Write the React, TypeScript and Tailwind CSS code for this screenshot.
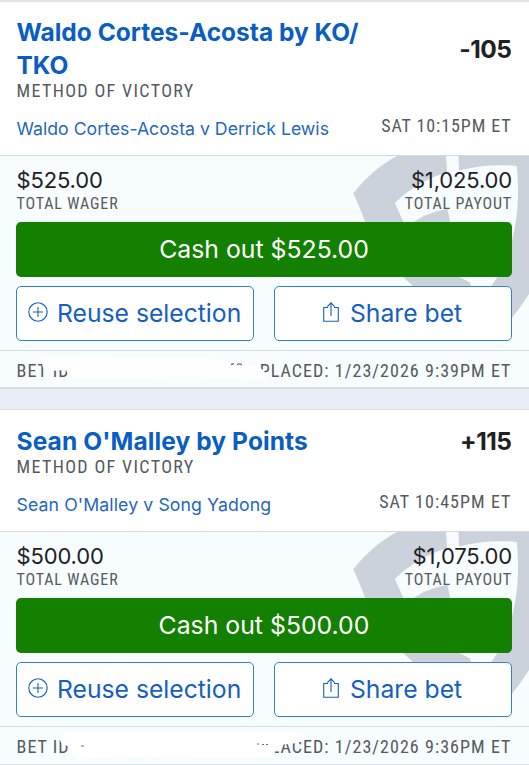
import type { ReactNode } from 'react';

const condensed = "font-['Roboto',sans-serif] font-stretch-condensed text-[#565a5e]";

// Watermark shield clipped by the right edge of the bet body
function Shield() {
  return (
    <svg className="absolute right-0 top-0 h-[195px] w-[179px]" viewBox="350 155 179 195" fill="#ccd2dc" aria-hidden="true">
      <path d="M399 155H446L447 172.5C427 178 409 189 394.8 203L404 223H365.5C362 213 358 203 353.2 193.5C365 178 381 164 399 155Z" />
      <path d="M458.5 155H529V294Q521 307 511 319L490 288L498 276C514 247 521 211 516.8 166Q488 163 459 170.5Z" />
      <path d="M412 223C424 215 435 211 447.5 209L450.5 223Z" />
      <path d="M401 275H456L470 282.5L471.5 288H415Z" />
    </svg>
  );
}

function OutlineButton({ icon, children, inset }: { icon: ReactNode; children: ReactNode; inset: string }) {
  return (
    <button className={`flex h-[55px] w-[238px] items-center rounded-[5px] border border-[#347ddd] bg-white text-[24.7px] text-[#1460c0] ${inset}`}>
      {icon}
      <span className="whitespace-nowrap">{children}</span>
    </button>
  );
}

const plusIcon = (
  <svg className="mb-[4px] mr-[9px] h-5 w-5 shrink-0" viewBox="0 0 20 20" fill="none" stroke="currentColor" strokeWidth="1.1">
    <circle cx="10" cy="10" r="9.2" />
    <path d="M10 5v10M5 10h10" />
  </svg>
);

const shareIcon = (
  <svg className="mb-[4px] mr-[11px] h-5 w-4 shrink-0" viewBox="0 0 16 20" fill="none" stroke="currentColor" strokeWidth="1.1">
    <path d="M5 5.5H.7V19.3H15.3V5.5H11M8 14V.9M4.3 4.6L8 .9L11.7 4.6" />
  </svg>
);

type Bet = {
  title: string[];
  odds: string;
  match: string;
  time: string;
  wager: string;
  payout: string;
  id: string;
  placed: string;
  headerClass: string;
  timeClass: string;
  footerClass: string;
  cover: ReactNode;
};

const bets: Bet[] = [
  {
    title: ['Waldo Cortes-Acosta by KO/', 'TKO'],
    odds: '-105',
    match: 'Waldo Cortes-Acosta v Derrick Lewis',
    time: 'SAT 10:15PM ET',
    wager: '$525.00',
    payout: '$1,025.00',
    id: 'BET ID',
    placed: 'PLACED: 1/23/2026 9:39PM ET',
    headerClass: 'h-[153px] pt-[14px]',
    timeClass: 'tracking-[0.9px]',
    footerClass: 'border-b-2',
    cover: (
      <>
        <path d="M42 12Q42 6 50 6L195 7Q225 8 245 13L258 16Q268 20 265 28Q240 28 200 26L80 27Q68 27 66 19L48 20Q42 18 42 12Z" fill="#fff" />
        <path d="M231 13.5l3-.8M237 13.8q2.5-2 5 .2" stroke="#6b6f73" strokeWidth="1.3" fill="none" />
      </>
    ),
  },
  {
    title: ["Sean O'Malley by Points"],
    odds: '+115',
    match: "Sean O'Malley v Song Yadong",
    time: 'SAT 10:45PM ET',
    wager: '$500.00',
    payout: '$1,075.00',
    id: 'BET ID',
    placed: 'PLACED: 1/23/2026 9:36PM ET',
    headerClass: 'h-[121px] pt-[15px] tracking-[0.1px]',
    timeClass: 'tracking-[1.05px]',
    footerClass: 'border-b',
    cover: (
      <>
        <path d="M60 12Q60 5 68 5H296Q306 6 304 13Q300 17 275 18V26Q272 30 240 31L130 29L80 32Q71 31 70 19Q60 19 60 12Z" fill="#fff" />
        <path d="M81 19h3M257 17h2M262 17.5h2M266 17.5h2" stroke="#6b6f73" strokeWidth="1.2" fill="none" />
      </>
    ),
  },
];

function Amount({ value, label, right }: { value: string; label: string; right?: boolean }) {
  return (
    <div className={right ? 'text-right' : ''}>
      <div className="text-[22px] leading-[26px] tracking-[-0.15px] text-[#1f2123]">{value}</div>
      <div className={`${condensed} pt-px text-[16px] leading-[20px] tracking-[0.85px]`}>{label}</div>
    </div>
  );
}

function BetCard({ bet }: { bet: Bet }) {
  return (
    <section>
      <div className={`bg-white px-[16.5px] ${bet.headerClass}`}>
        <div className="flex items-center justify-between">
          <h2 className="text-[24.5px] font-bold leading-[33px] text-[#0a5dc2]">
            {bet.title.map((line) => (
              <span key={line} className="block whitespace-nowrap">{line}</span>
            ))}
          </h2>
          <span className="pr-px text-[24.5px] font-bold leading-[33px] tracking-[-0.5px] text-[#1f2123]">{bet.odds}</span>
        </div>
        <div className={`${condensed} text-[18px] leading-[18px] tracking-[1.35px]`}>METHOD OF VICTORY</div>
        <div className="mt-[19px] flex items-start justify-between">
          <span className="text-[17.7px] leading-5 text-[#2567bd]">{bet.match}</span>
          <span className={`${condensed} mr-px mt-[-2px] text-[18px] leading-[18px] ${bet.timeClass}`}>{bet.time}</span>
        </div>
      </div>
      <div className="relative h-[195px] bg-[#f7fcff]">
        <Shield />
        <div className="relative flex h-[195px] flex-col border-t border-[#d4d8de] pl-[16px] pr-[17px] pt-[11px]">
          <div className="flex justify-between pl-[0.5px]">
            <Amount value={bet.wager} label="TOTAL WAGER" />
            <Amount value={bet.payout} label="TOTAL PAYOUT" right />
          </div>
          <button className="mt-[8px] h-[55px] shrink-0 rounded-[5px] bg-[#138000] text-[24.8px] text-white">Cash out {bet.wager}</button>
          <div className="mt-[9px] flex justify-between">
            <OutlineButton icon={plusIcon} inset="pl-[11px]">Reuse selection</OutlineButton>
            <OutlineButton icon={shareIcon} inset="pl-[48px]">Share bet</OutlineButton>
          </div>
        </div>
      </div>
      <div className={`${condensed} relative flex h-[39px] items-center justify-between border-t border-[#d9dee4] bg-[#f7fcff] pl-[16.5px] pr-[17.5px] pt-[2px] text-[18px] tracking-[1.05px] ${bet.footerClass}`}>
        <span>{bet.id}</span>
        <span>{bet.placed}</span>
        <svg className="absolute left-0 top-0 h-[37px] w-[320px]" viewBox="0 0 320 37" aria-hidden="true">{bet.cover}</svg>
      </div>
    </section>
  );
}

export default function App() {
  return (
    <main className="flex h-[765px] w-[529px] flex-col overflow-hidden border-t-2 border-[#e1e3e9] bg-[#e9edf5] font-['Inter',sans-serif]">
      <BetCard bet={bets[0]} />
      <div className="h-[21px] shrink-0 border-b border-[#d9dee4]" />
      <BetCard bet={bets[1]} />
    </main>
  );
}
